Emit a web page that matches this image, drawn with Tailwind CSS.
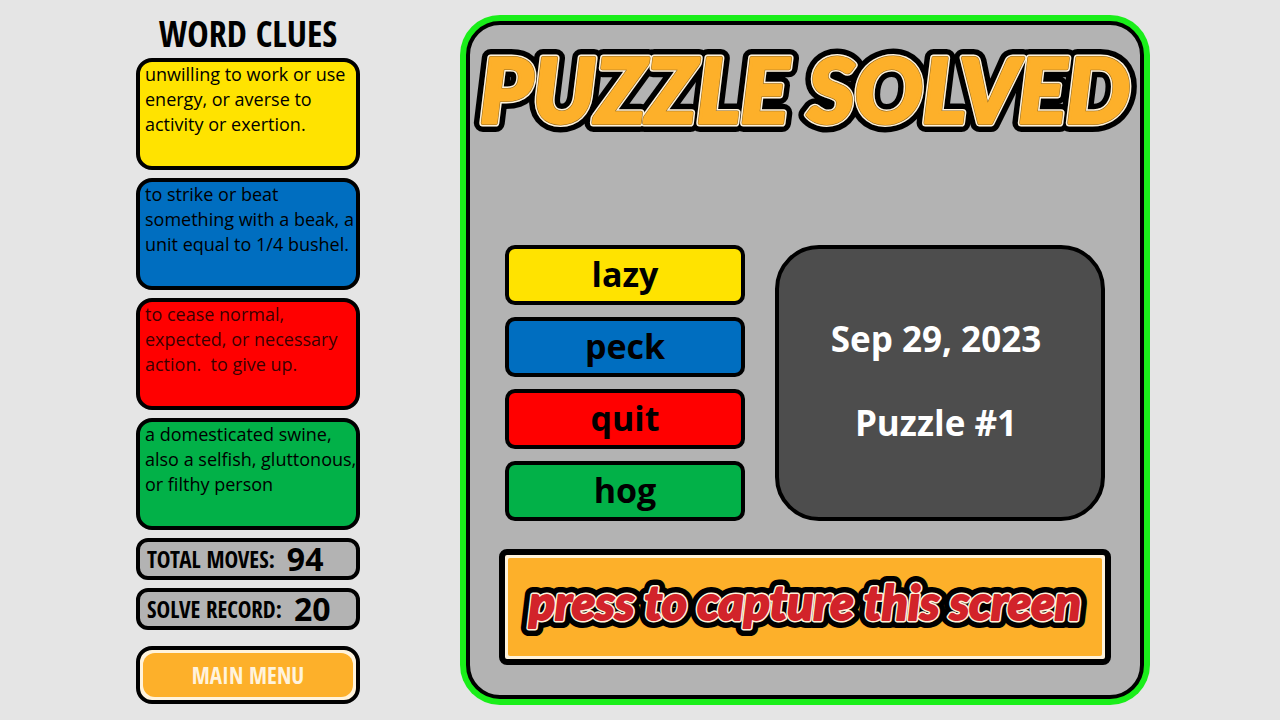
<!DOCTYPE html>
<html lang="en">
<head>
    <meta charset="UTF-8">
    <meta name="viewport" content="width=device-width, initial-scale=1.0">
    <title>Puzzle Solved</title>
    <script src="https://cdn.jsdelivr.net/npm/@tailwindcss/browser@4"></script>
</head>

<body class="bg-[#e5e5e5] min-h-screen text-black font-['Open_Sans','Noto_Sans',sans-serif]">
    <div class="flex items-start pl-[136px] pr-[130px] py-[15px] gap-[100px]">

        <!-- Clues -->
        <aside class="w-56 shrink-0">
            <h2 class="h-[43px] text-center text-[36px] leading-[38px] font-bold whitespace-nowrap font-['Noto_Sans_ExtraCondensed','Open_Sans_Condensed','Roboto_Condensed',sans-serif]">WORD CLUES</h2>
            <ul class="space-y-2 text-[18px] leading-[25px] whitespace-nowrap">
                <li class="h-28 border-4 border-black rounded-2xl pl-[5px] bg-[#ffe300]">unwilling to work or use<br>energy, or averse to<br>activity or exertion.</li>
                <li class="h-28 border-4 border-black rounded-2xl pl-[5px] bg-[#006ec0]">to strike or beat<br>something with a beak, a<br>unit equal to 1/4 bushel.</li>
                <li class="h-28 border-4 border-black rounded-2xl pl-[5px] bg-[#ff0000] text-black/80">to cease normal,<br>expected, or necessary<br>action.&nbsp; to give up.</li>
                <li class="h-28 border-4 border-black rounded-2xl pl-[5px] bg-[#02b148]">a domesticated swine,<br>also a selfish, gluttonous,<br>or filthy person</li>
            </ul>

            <dl class="mt-2 space-y-2">
                <div class="flex items-center gap-3 h-[42px] border-4 border-black rounded-xl pl-[7px] bg-[#b3b3b3]">
                    <dt class="text-[23px] leading-none font-bold whitespace-nowrap font-['Noto_Sans_ExtraCondensed','Open_Sans_Condensed','Roboto_Condensed',sans-serif]">TOTAL MOVES:</dt>
                    <dd class="text-[32px] leading-none font-bold">94</dd>
                </div>
                <div class="flex items-center gap-3 h-[42px] border-4 border-black rounded-xl pl-[7px] bg-[#b3b3b3]">
                    <dt class="text-[23px] leading-none font-bold whitespace-nowrap font-['Noto_Sans_ExtraCondensed','Open_Sans_Condensed','Roboto_Condensed',sans-serif]">SOLVE RECORD:</dt>
                    <dd class="text-[32px] leading-none font-bold">20</dd>
                </div>
            </dl>

            <button type="button" class="mt-4 w-full h-[58px] rounded-2xl border-4 border-black bg-[#fff3dc] p-[3px]">
                <span class="flex h-full items-center justify-center rounded-xl bg-[#fdb02a] text-[23px] leading-none font-bold text-[#fff3dc] font-['Noto_Sans_ExtraCondensed','Open_Sans_Condensed','Roboto_Condensed',sans-serif]">MAIN MENU</span>
            </button>
        </aside>

        <!-- Result -->
        <main class="flex-1 rounded-[40px] bg-[#1aee1a] p-1.5">
            <div class="rounded-[34px] border-4 border-black bg-[#b3b3b3] pb-[30px]">
                <h1>
                    <svg class="block w-full" viewBox="0 0 670 130">
                        <defs>
                            <text id="title" x="335" y="98" text-anchor="middle" font-family="Lato, sans-serif" font-size="90" font-weight="900" font-style="italic" stroke-linejoin="round">PUZZLE SOLVED</text>
                        </defs>
                        <use href="#title" fill="#000" stroke="#000" stroke-width="18"/>
                        <use href="#title" fill="#fff3dc" stroke="#fff3dc" stroke-width="7"/>
                        <use href="#title" fill="#8a6420" stroke="#8a6420" stroke-width="4"/>
                        <use href="#title" fill="#fdb02a" stroke="#fdb02a" stroke-width="3"/>
                    </svg>
                </h1>

                <div class="mt-[90px] px-[29px]">
                    <div class="grid grid-cols-[240px_1fr] gap-[30px] px-1.5">
                        <ul class="space-y-3 text-center text-[34px] leading-[50px] font-bold">
                            <li class="h-[60px] border-4 border-black rounded-[10px] bg-[#ffe300]">lazy</li>
                            <li class="h-[60px] border-4 border-black rounded-[10px] bg-[#006ec0]">peck</li>
                            <li class="h-[60px] border-4 border-black rounded-[10px] bg-[#ff0000]">quit</li>
                            <li class="h-[60px] border-4 border-black rounded-[10px] bg-[#02b148]">hog</li>
                        </ul>
                        <div class="flex flex-col items-center justify-center gap-[42px] border-4 border-black rounded-[44px] bg-[#4d4d4d] pr-2 pb-1 text-white text-[35px] leading-[42px] font-bold">
                            <p>Sep 29, 2023</p>
                            <p>Puzzle #1</p>
                        </div>
                    </div>

                    <button type="button" class="mt-7 block w-full rounded-lg border-[6px] border-black bg-[#fff3dc] p-[3px]">
                        <svg class="block w-full rounded-xs bg-[#fdb02a]" viewBox="0 0 594 98">
                            <defs>
                                <text id="capture" x="297" y="62" text-anchor="middle" font-family="Lato, sans-serif" font-size="48" font-weight="900" font-style="italic" stroke-linejoin="round">press to capture this screen</text>
                            </defs>
                            <use href="#capture" fill="#000" stroke="#000" stroke-width="16"/>
                            <use href="#capture" fill="#fff3dc" stroke="#fff3dc" stroke-width="5"/>
                            <use href="#capture" fill="#d2232a" stroke="#d2232a" stroke-width="2"/>
                        </svg>
                    </button>
                </div>
            </div>
        </main>
    </div>
</body>
</html>
